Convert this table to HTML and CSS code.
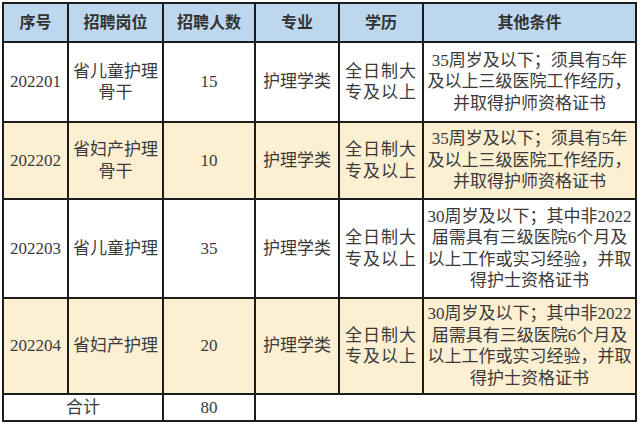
FILE: index.html
```html
<!DOCTYPE html>
<html lang="zh">
<head>
<meta charset="utf-8">
<link rel="stylesheet" href="styles.css">
</head>
<body>
<table class="grid">
  <colgroup>
    <col class="c1"><col class="c2"><col class="c3"><col class="c4"><col class="c5"><col class="c6">
  </colgroup>
  <thead>
    <tr class="head">
      <th>序号</th><th>招聘岗位</th><th>招聘人数</th><th>专业</th><th>学历</th><th>其他条件</th>
    </tr>
  </thead>
  <tbody>
    <tr class="r1">
      <td class="num">202201</td>
      <td>省儿童护理<br>骨干</td>
      <td class="num">15</td>
      <td>护理学类</td>
      <td class="edu">全日制大<br>专及以上</td>
      <td class="cond">35周岁及以下；须具有5年<br>及以上三级医院工作经历，<br>并取得护师资格证书</td>
    </tr>
    <tr class="r2 alt">
      <td class="num">202202</td>
      <td>省妇产护理<br>骨干</td>
      <td class="num">10</td>
      <td>护理学类</td>
      <td class="edu">全日制大<br>专及以上</td>
      <td class="cond">35周岁及以下；须具有5年<br>及以上三级医院工作经历，<br>并取得护师资格证书</td>
    </tr>
    <tr class="r3">
      <td class="num">202203</td>
      <td>省儿童护理</td>
      <td class="num">35</td>
      <td>护理学类</td>
      <td class="edu">全日制大<br>专及以上</td>
      <td class="cond">30周岁及以下；其中非2022<br>届需具有三级医院6个月及<br>以上工作或实习经验，并取<br>得护士资格证书</td>
    </tr>
    <tr class="r4 alt">
      <td class="num">202204</td>
      <td>省妇产护理</td>
      <td class="num">20</td>
      <td>护理学类</td>
      <td class="edu">全日制大<br>专及以上</td>
      <td class="cond">30周岁及以下；其中非2022<br>届需具有三级医院6个月及<br>以上工作或实习经验，并取<br>得护士资格证书</td>
    </tr>
    <tr class="total">
      <td colspan="2">合计</td>
      <td class="num">80</td>
      <td colspan="3"></td>
    </tr>
  </tbody>
</table>
</body>
</html>
```
FILE: styles.css
```css
html, body {
  margin: 0;
  padding: 0;
  background: #ffffff;
}
body {
  padding: 2px 0 0 2px;
}
.grid {
  border-collapse: collapse;
  table-layout: fixed;
  width: 633px;
  font-family: "Liberation Serif", "Noto Sans CJK SC", serif;
  font-size: 17px;
  color: #3a3a3a;
}
.c1 { width: 65px; }
.c2 { width: 95px; }
.c3 { width: 92px; }
.c4 { width: 84px; }
.c5 { width: 84px; }
.c6 { width: 213px; }
.grid th, .grid td {
  border: 2px solid #1c1c1c;
  padding: 0;
  text-align: center;
  vertical-align: middle;
  line-height: 21.5px;
  font-weight: 400;
  overflow: hidden;
  white-space: nowrap;
}
.head th {
  background: #bdd7ee;
  height: 37px;
  font-weight: 700;
  font-size: 16px;
  color: #333333;
}
.alt td {
  background: #fcefd2;
}
.r1 td { height: 78px; }
.r2 td { height: 75px; }
.r3 td { height: 97px; }
.r4 td { height: 94px; }
.total td { height: 25px; line-height: 24px; }
.edu {
  letter-spacing: 1px;
}
.cond {
  font-size: 17px;
}
```
